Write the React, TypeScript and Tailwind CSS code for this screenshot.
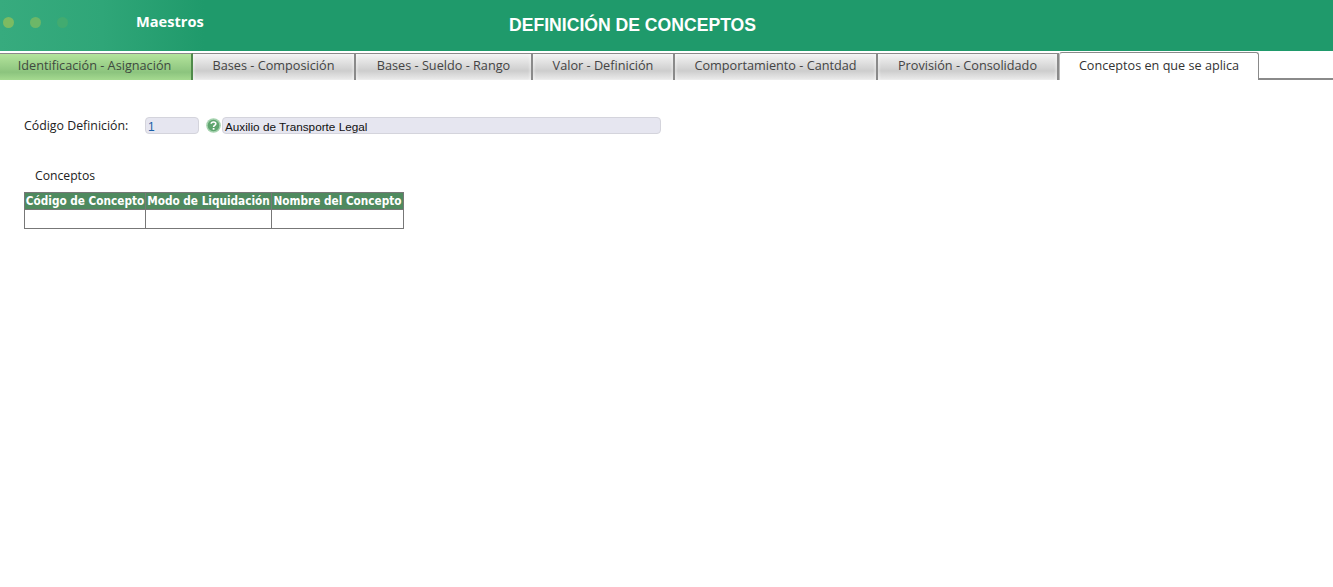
const tabs = [
  { label: "Identificación - Asignación", width: "w-[193px]", green: true },
  { label: "Bases - Composición", width: "w-[163px]" },
  { label: "Bases - Sueldo - Rango", width: "w-[177px]" },
  { label: "Valor - Definición", width: "w-[142px]" },
  { label: "Comportamiento - Cantdad", width: "w-[203px]" },
  { label: "Provisión - Consolidado", width: "w-[181px]" },
];

function HelpIcon() {
  return (
    <svg width="15" height="15" viewBox="0 0 15 15" className="shrink-0">
      <circle cx="7.5" cy="7.5" r="7.3" fill="#a5d2ae" />
      <circle cx="7.5" cy="7.5" r="5.8" fill="#5fa56f" />
      <path
        d="M5.2 5.8 C5.3 3.4 9.8 3.4 9.8 5.8 C9.8 7.4 7.6 7.3 7.6 8.9"
        fill="none"
        stroke="#ffffff"
        strokeWidth="1.6"
      />
      <rect x="6.7" y="10" width="1.8" height="1.7" fill="#ffffff" />
    </svg>
  );
}

export default function App() {
  return (
    <div className="min-h-[587px] bg-white font-['Open_Sans',sans-serif] text-[#222]">
      {/* Top bar */}
      <header className="flex h-[51px] bg-[#1f9a6b]">
        <div className="flex w-[204px] items-start bg-gradient-to-r from-[#37ab7e] via-[#2fa678] to-[#1f9a6b] pl-[3px] pt-[17px]">
          <span className="h-[11px] w-[11px] rounded-full bg-[#7cbb62] blur-[0.5px]" />
          <span className="ml-[16px] h-[11px] w-[11px] rounded-full bg-[#6cb768] blur-[0.5px]" />
          <span className="ml-[16px] h-[11px] w-[11px] rounded-full bg-[#42ab70] blur-[0.5px]" />
          <span className="ml-[68px] mt-[-6px] text-[14.6px] font-bold leading-[20px] text-white">Maestros</span>
        </div>
        <h1 className="ml-[305px] pt-[14px] font-['Liberation_Sans',sans-serif] text-[17.6px] font-bold leading-[22px] text-white">
          DEFINICIÓN DE CONCEPTOS
        </h1>
      </header>

      {/* Tabs */}
      <nav className="mt-[2px] flex h-[27px] border-b-2 border-[#8a8a8a]">
        {tabs.map((tab) => (
          <div
            key={tab.label}
            className={`${tab.width} flex h-[27px] shrink-0 items-center justify-center border-r-2 border-t border-[#8a8a8a] pb-[3px] text-[12.7px] ${
              tab.green
                ? "border-r-[#4f8a4a] bg-gradient-to-b from-[#b4e49c] via-[#8cc47e] via-70% to-[#a5da90] pr-[2px] text-[#3f4a3f]"
                : "bg-gradient-to-b from-[#f4f4f4] via-[#cdcdcd] via-65% to-[#ececec] text-[#444] shadow-[inset_2px_0_2px_rgba(255,255,255,0.3),inset_-2px_0_2px_rgba(255,255,255,0.3)]"
            }`}
          >
            {tab.label}
          </div>
        ))}
        <div className="-mt-[1px] flex h-[28px] w-[200px] shrink-0 items-center justify-center rounded-t-[3px] border-x border-t border-[#8a8a8a] border-l-[#bbb] bg-white pb-[2px] text-[12.65px] text-[#333]">
          Conceptos en que se aplica
        </div>
      </nav>

      <main className="pl-[24px] pt-[36px]">
        <div className="flex h-[20px] items-center">
          <label className="w-[121px] text-[12.35px] leading-[20px] text-[#222]">Código Definición:</label>
          <div className="-mt-[2px] h-[17px] w-[54px] rounded-[4px] border border-[#d4d4dc] bg-[#e6e6f0] pl-[2px] font-['Liberation_Sans',sans-serif] text-[12px] leading-[18px] text-[#1a5fa8]">
            1
          </div>
          <div className="ml-[7px] -mt-[2px]">
            <HelpIcon />
          </div>
          <div className="-mt-[2px] ml-[1px] h-[17px] w-[439px] rounded-[4px] border border-[#d4d4dc] bg-[#e6e6f0] pl-[2px] font-['Liberation_Sans',sans-serif] text-[11.75px] leading-[18px] text-[#111]">
            Auxilio de Transporte Legal
          </div>
        </div>

        <h2 className="ml-[11px] mt-[30px] text-[12.2px] font-normal leading-[20px] text-[#222]">Conceptos</h2>

        <table className="mt-[6px] w-[379px] table-fixed border-collapse whitespace-nowrap font-['DejaVu_Sans_Condensed','DejaVu_Sans',sans-serif] text-[11.7px]">
          <thead>
            <tr className="h-[17px] bg-[#4f8a5f] text-white">
              <th className="w-[121px] border border-[#777] p-0 pt-[1px] font-bold leading-[15px]">Código de Concepto</th>
              <th className="w-[126px] border border-[#777] p-0 pt-[1px] font-bold leading-[15px]">Modo de Liquidación</th>
              <th className="w-[132px] border border-[#777] p-0 pt-[1px] font-bold leading-[15px]">Nombre del Concepto</th>
            </tr>
          </thead>
          <tbody>
            <tr className="h-[19px]">
              <td className="border border-[#777]" />
              <td className="border border-[#777]" />
              <td className="border border-[#777]" />
            </tr>
          </tbody>
        </table>
      </main>
    </div>
  );
}
